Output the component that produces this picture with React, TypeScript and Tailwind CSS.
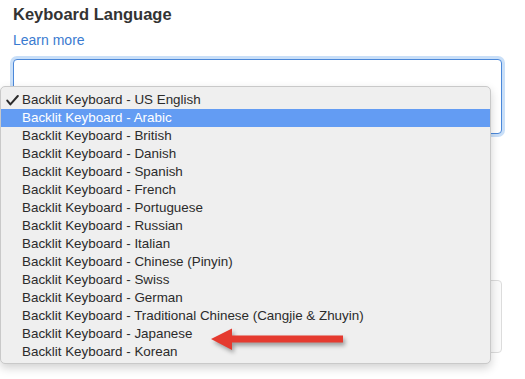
const layouts = [
  "US English",
  "Arabic",
  "British",
  "Danish",
  "Spanish",
  "French",
  "Portuguese",
  "Russian",
  "Italian",
  "Chinese (Pinyin)",
  "Swiss",
  "German",
  "Traditional Chinese (Cangjie & Zhuyin)",
  "Japanese",
  "Korean",
];

function Check() {
  return (
    <svg width="13" height="11" viewBox="0 0 13 11" className="absolute left-[5px] top-[4px]">
      <path d="M1.3 5.6 L4.4 9.4 L11.8 1" fill="none" stroke="#2b2b2b" strokeWidth="2" strokeLinecap="round" strokeLinejoin="round" />
    </svg>
  );
}

export default function App() {
  return (
    <div className="relative w-[525px] h-[379px] overflow-hidden bg-white px-[13px] font-['Liberation_Sans',Arial,sans-serif]">
      {/* Settings form */}
      <h2 className="pt-[2px] text-[16.5px] leading-[24px] font-bold text-[#333]">Keyboard Language</h2>
      <a className="block mt-[4px] text-[14px] leading-[20px] text-[#3a7bd0]">Learn more</a>
      <div className="mt-[9px] h-[75px] w-[489px] rounded-[4px] border border-[#4b88d9] bg-white shadow-[0_0_0_3px_#c9dff8]" />
      <div className="mt-[146px] h-[73px] w-[489px] rounded-[4px] border border-[#dcdcdc] bg-[#fafafa]" />

      {/* Open select menu */}
      <div className="absolute left-0 top-[86px] w-[491px] h-[278px] rounded-[5px] border border-[#c9c9c9] bg-[#efefef] py-[4px] shadow-[0_4px_10px_rgba(0,0,0,0.18)]">
        {layouts.map((name, i) => (
          <div
            key={name}
            className={`relative h-[18px] pl-[21px] text-[13.4px] leading-[18px] whitespace-nowrap ${
              i === 1 ? "bg-[#639cf3] text-white" : "text-[#2b2b2b]"
            }`}
          >
            {i === 0 && <Check />}
            Backlit Keyboard - {name}
          </div>
        ))}
      </div>

      {/* Annotation arrow */}
      <svg
        width="140"
        height="30"
        viewBox="0 0 140 30"
        className="absolute left-[208px] top-[325px] drop-shadow-[2px_3px_2px_rgba(0,0,0,0.35)]"
      >
        <polygon points="3,14 24,3.5 24,10.5 135,10.5 135,17.5 24,17.5 24,25" fill="#e53a2f" />
      </svg>
    </div>
  );
}
